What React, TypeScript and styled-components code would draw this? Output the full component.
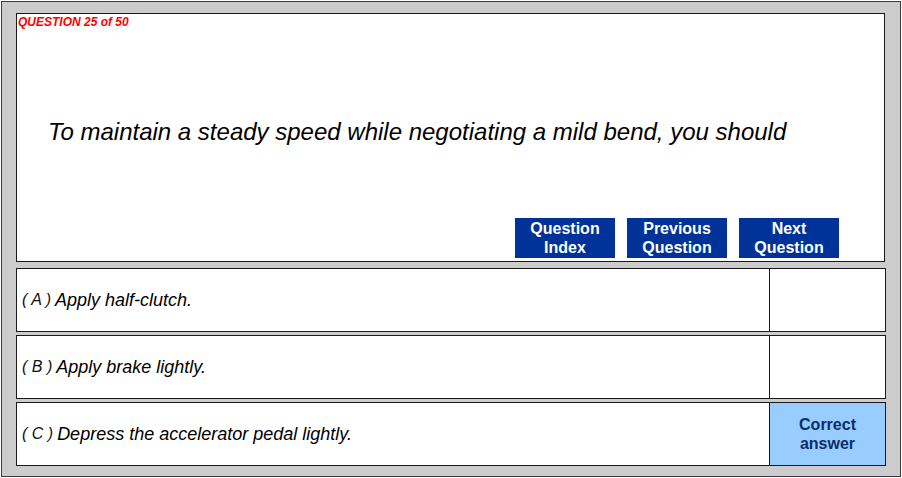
import React from "react";
import styled, { createGlobalStyle } from "styled-components";

const Global = createGlobalStyle`
  html, body { margin: 0; padding: 0; background: #ffffff; }
  body { font-family: "Liberation Sans", Arial, sans-serif; }
`;

const Frame = styled.div`
  box-sizing: border-box;
  margin: 1px;
  width: 900px;
  height: 476px;
  border: 1px solid #3a3a3a;
  background: #cccccc;
  padding: 11px 0 0 14px;
  display: flex;
  flex-direction: column;
`;

const QuestionPanel = styled.section`
  box-sizing: border-box;
  width: 869px;
  height: 249px;
  background: #ffffff;
  border: 1px solid #1a1a1a;
  display: flex;
  flex-direction: column;
`;

const Counter = styled.div`
  font-size: 12px;
  line-height: 14px;
  font-weight: bold;
  font-style: italic;
  color: #ff0000;
  padding: 1px 0 0 1px;
`;

const QuestionText = styled.div`
  margin-top: 89px;
  padding-left: 31px;
  font-size: 24px;
  line-height: 28px;
  font-style: italic;
  color: #000000;
`;

const ButtonBar = styled.div`
  margin-top: auto;
  display: flex;
  justify-content: flex-end;
  gap: 12px;
  padding: 0 45px 3px 0;
`;

const NavButton = styled.button`
  box-sizing: border-box;
  width: 100px;
  height: 40px;
  border: none;
  padding: 0;
  background: #003399;
  color: #ffffff;
  font-family: "Liberation Sans", Arial, sans-serif;
  font-size: 16px;
  line-height: 19px;
  font-weight: bold;
  text-align: center;
  cursor: pointer;
`;

const Options = styled.div`
  margin-top: 6px;
  display: flex;
  flex-direction: column;
  gap: 3px;
`;

const OptionRow = styled.div`
  box-sizing: border-box;
  width: 870px;
  height: 64px;
  background: #ffffff;
  border: 1px solid #1a1a1a;
  display: flex;
`;

const OptionText = styled.div`
  flex: 1;
  display: flex;
  align-items: center;
  padding-left: 5px;
  font-size: 18px;
  font-style: italic;
  color: #000000;
  border-right: 1px solid #1a1a1a;
`;

const Letter = styled.span`
  font-size: 16px;
  margin-right: 4px;
  color: #111111;
`;

const AnswerCell = styled.div<{ $correct?: boolean }>`
  width: 115px;
  display: flex;
  align-items: center;
  justify-content: center;
  text-align: center;
  background: ${(p) => (p.$correct ? "#99ccff" : "#ffffff")};
  color: #0a2f6b;
  font-size: 16px;
  line-height: 19px;
  font-weight: bold;
`;

const options = [
  { letter: "A", text: "Apply half-clutch.", correct: false },
  { letter: "B", text: "Apply brake lightly.", correct: false },
  { letter: "C", text: "Depress the accelerator pedal lightly.", correct: true },
];

export default function App() {
  return (
    <>
      <Global />
      <Frame>
        <QuestionPanel>
          <Counter>QUESTION 25 of 50</Counter>
          <QuestionText>
            To maintain a steady speed while negotiating a mild bend, you should
          </QuestionText>
          <ButtonBar>
            <NavButton>
              Question
              <br />
              Index
            </NavButton>
            <NavButton>
              Previous
              <br />
              Question
            </NavButton>
            <NavButton>
              Next
              <br />
              Question
            </NavButton>
          </ButtonBar>
        </QuestionPanel>
        <Options>
          {options.map((o) => (
            <OptionRow key={o.letter}>
              <OptionText>
                <Letter>( {o.letter} )</Letter>
                {o.text}
              </OptionText>
              <AnswerCell $correct={o.correct}>
                {o.correct ? (
                  <span>
                    Correct
                    <br />
                    answer
                  </span>
                ) : null}
              </AnswerCell>
            </OptionRow>
          ))}
        </Options>
      </Frame>
    </>
  );
}
